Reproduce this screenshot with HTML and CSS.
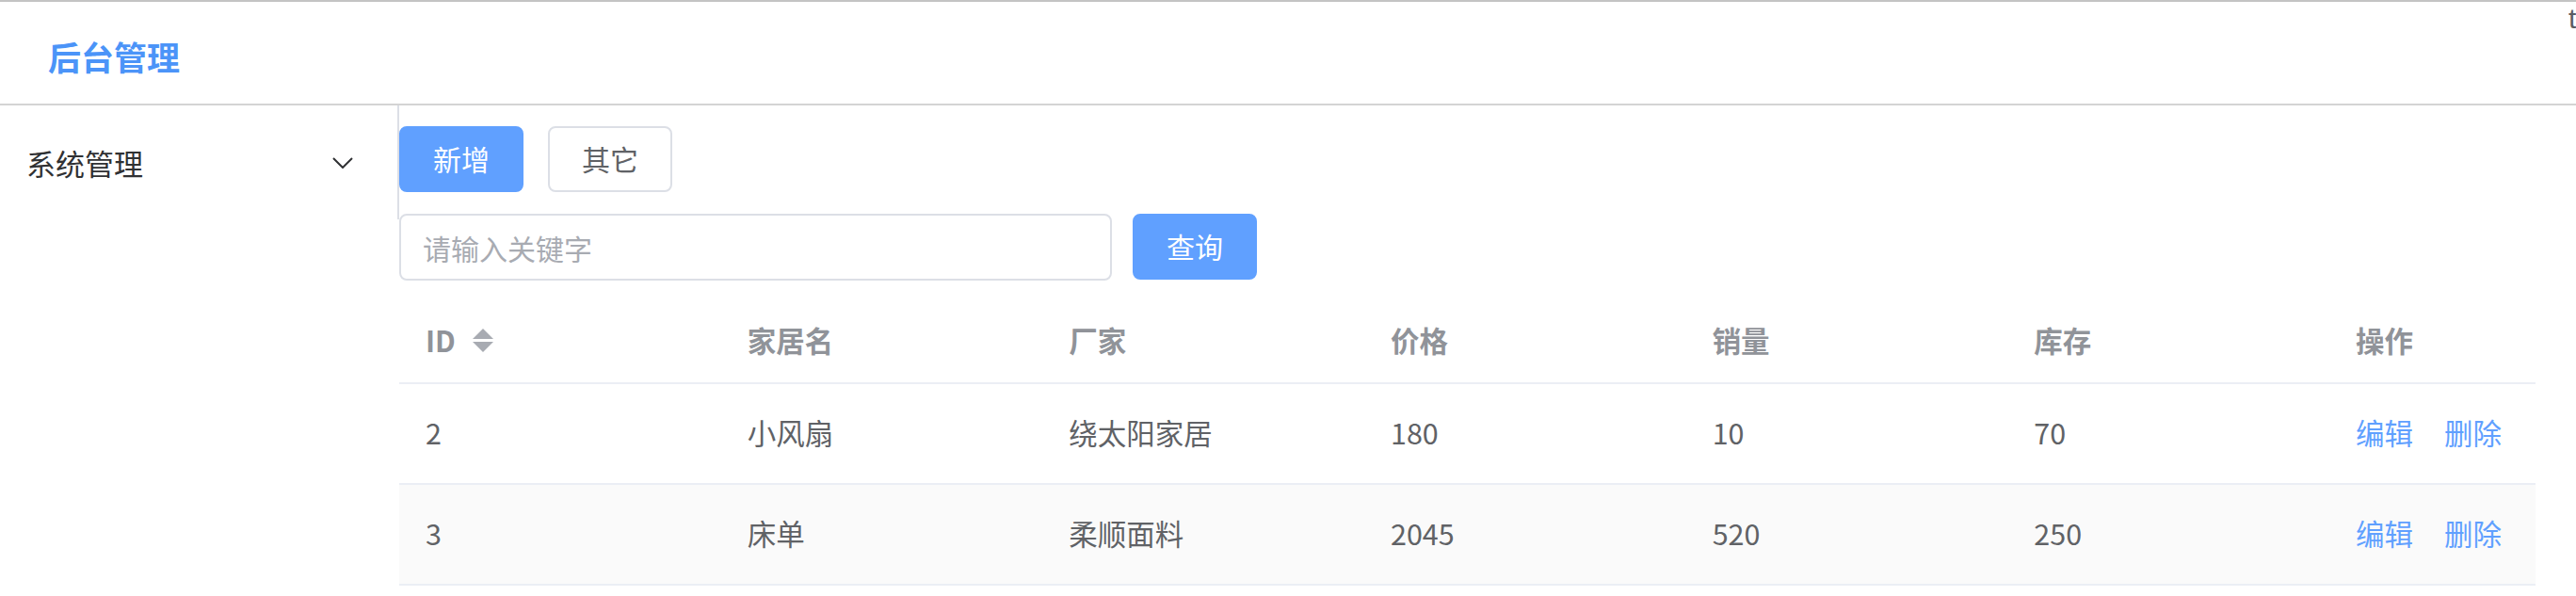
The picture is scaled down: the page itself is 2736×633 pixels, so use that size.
FILE: index.html
```html
<!DOCTYPE html>
<html lang="zh-CN">
<head>
<meta charset="utf-8">
<title>后台管理</title>
<link rel="stylesheet" href="styles.css">
</head>
<body>
<header class="topbar">
  <div class="brand">后台管理</div>
  <div class="user">t</div>
</header>
<div class="layout">
  <aside class="aside">
    <div class="menu">
      <span class="menu-title">系统管理</span>
      <svg class="chevron" width="22" height="12" viewBox="0 0 22 12"><polyline points="1,1 11,11 21,1" fill="none" stroke="#303133" stroke-width="2"/></svg>
    </div>
  </aside>
  <main class="main">
    <div class="toolbar">
      <button class="btn btn-primary">新增</button>
      <button class="btn btn-default">其它</button>
    </div>
    <div class="search">
      <input class="search-input" type="text" placeholder="请输入关键字">
      <button class="btn btn-primary">查询</button>
    </div>
    <div class="table">
      <div class="row head">
        <div class="cell"><span>ID</span><span class="caret"><i class="up"></i><i class="down"></i></span></div>
        <div class="cell">家居名</div>
        <div class="cell">厂家</div>
        <div class="cell">价格</div>
        <div class="cell">销量</div>
        <div class="cell">库存</div>
        <div class="cell">操作</div>
      </div>
      <div class="row body">
        <div class="cell">2</div>
        <div class="cell">小风扇</div>
        <div class="cell">绕太阳家居</div>
        <div class="cell">180</div>
        <div class="cell">10</div>
        <div class="cell">70</div>
        <div class="cell ops"><a class="link">编辑</a><a class="link">删除</a></div>
      </div>
      <div class="row body striped">
        <div class="cell">3</div>
        <div class="cell">床单</div>
        <div class="cell">柔顺面料</div>
        <div class="cell">2045</div>
        <div class="cell">520</div>
        <div class="cell">250</div>
        <div class="cell ops"><a class="link">编辑</a><a class="link">删除</a></div>
      </div>
    </div>
  </main>
</div>
</body>
</html>
```
FILE: styles.css
```css
* { box-sizing: border-box; }
html, body {
  margin: 0;
  padding: 0;
  background: #ffffff;
  overflow: hidden;
}
body {
  font-family: "Noto Sans CJK SC", "Noto Sans", sans-serif;
  color: #606266;
  width: 2736px;
  height: 633px;
}
.topbar {
  height: 112px;
  border-top: 2px solid #c4c4c4;
  border-bottom: 2px solid #d4d4d4;
  display: flex;
  align-items: center;
  justify-content: space-between;
  padding-left: 51px;
}
.brand {
  font-size: 35px;
  font-weight: 700;
  color: #4b94f8;
  line-height: 1;
  padding-top: 6px;
}
.user {
  align-self: flex-start;
  font-family: "Liberation Sans", sans-serif;
  font-size: 30px;
  line-height: 1;
  color: #5a5d63;
  margin-top: 3px;
  margin-right: -1px;
  width: 9px;
  overflow: visible;
}
.layout {
  display: flex;
  align-items: flex-start;
}
.aside {
  width: 424px;
  flex: none;
}
.menu {
  height: 121px;
  border-right: 2px solid #dcdfe6;
  display: flex;
  align-items: center;
  justify-content: space-between;
  padding-left: 28px;
  padding-right: 47px;
}
.menu-title {
  font-size: 31px;
  line-height: 1;
  color: #303133;
  padding-bottom: 1px;
}
.chevron {
  display: block;
}
.main {
  flex: 1;
  padding-top: 22px;
  padding-right: 43px;
}
.toolbar {
  display: flex;
  gap: 26px;
}
.btn {
  height: 70px;
  width: 132px;
  border-radius: 8px;
  font-family: "Noto Sans CJK SC", sans-serif;
  font-size: 30px;
  line-height: 1;
  padding: 0 0 2px 0;
  display: flex;
  align-items: center;
  justify-content: center;
  cursor: pointer;
}
.btn-primary {
  background: #60a0ff;
  border: 2px solid #60a0ff;
  color: #ffffff;
}
.btn-default {
  background: #ffffff;
  border: 2px solid #dcdfe6;
  color: #606266;
}
.search {
  display: flex;
  gap: 22px;
  margin-top: 23px;
}
.search-input {
  width: 757px;
  height: 71px;
  border: 2px solid #dcdfe6;
  border-radius: 8px;
  padding: 0 0 0 23px;
  font-family: "Noto Sans CJK SC", sans-serif;
  font-size: 30px;
  color: #606266;
  outline: none;
}
.search-input::placeholder {
  color: #a8abb2;
}
.table {
  margin-top: 25px;
  width: 2269px;
}
.row {
  display: grid;
  grid-template-columns: repeat(6, 341.67px) 1fr;
  border-bottom: 2px solid #ebeef5;
}
.row.head { height: 85px; }
.row.body { height: 107px; }
.row.striped { background: #fafafa; }
.cell {
  display: flex;
  align-items: center;
  padding-left: 28px;
  padding-bottom: 3px;
  font-size: 30.5px;
  line-height: 1;
  color: #606266;
}
.head .cell {
  font-weight: 700;
  color: #909399;
  padding-bottom: 6px;
}
.caret {
  display: inline-flex;
  flex-direction: column;
  gap: 3px;
  margin-left: 18px;
}
.caret i {
  display: block;
  width: 0;
  height: 0;
  border-left: 11px solid transparent;
  border-right: 11px solid transparent;
}
.caret .up { border-bottom: 11px solid #a8abb2; }
.caret .down { border-top: 11px solid #a8abb2; }
.ops { gap: 33px; }
.link {
  color: #60a0ff;
  cursor: pointer;
}
```
